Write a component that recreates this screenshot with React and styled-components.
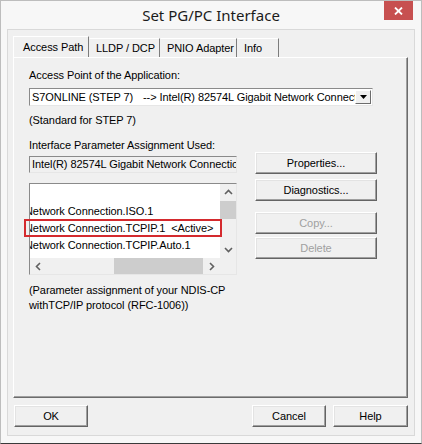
import styled, { createGlobalStyle } from 'styled-components';

const GlobalStyle = createGlobalStyle`
  html, body {
    margin: 0;
    padding: 0;
    background: #ffffff;
  }
  body {
    font-family: "Liberation Sans", Arial, sans-serif;
    letter-spacing: -0.08px;
  }
  * {
    box-sizing: border-box;
  }
`;

const Window = styled.div`
  width: 422px;
  height: 444px;
  display: flex;
  flex-direction: column;
  background: #f7f7f7;
  border: 1px solid #bdbdbd;
  border-bottom-color: #3a3a3a;
  padding: 0 6px 7px;
`;

const TitleBar = styled.div`
  height: 28px;
  display: grid;
  grid-template-columns: 1fr auto 1fr;
  align-items: center;
`;

const Title = styled.div`
  grid-column: 2;
  font-family: "Noto Sans", "Open Sans", sans-serif;
  font-size: 15px;
  letter-spacing: 0;
  color: #1b1b1b;
  padding-bottom: 1px;
`;

const CloseButton = styled.div`
  justify-self: end;
  align-self: start;
  width: 29px;
  height: 19px;
  margin-right: 2px;
  background: #c75050;
  display: flex;
  align-items: center;
  justify-content: center;
`;

const Client = styled.div`
  flex: 1;
  display: flex;
  flex-direction: column;
  background: #f0f0f0;
  border: 1px solid #d9d9d9;
  padding: 6px 6px 8px 5px;
`;

const TabRow = styled.div`
  height: 21px;
  display: flex;
  align-items: flex-end;
`;

const Tab = styled.div`
  width: ${(p) => p.$width}px;
  height: ${(p) => (p.$active ? 21 : 19)}px;
  padding-left: ${(p) => (p.$active ? 9 : 6)}px;
  display: flex;
  align-items: center;
  font-size: 11px;
  color: #000;
  border-top: 1px solid #ffffff;
  border-left: 1px solid ${(p) => (p.$first ? '#ffffff' : 'transparent')};
  border-right: 1px solid #7c7c7c;
  white-space: nowrap;
`;

const Panel = styled.div`
  flex: 1;
  display: flex;
  flex-direction: column;
  border: 1px solid;
  border-color: #ffffff #6c6c6c #6c6c6c #ffffff;
  box-shadow: inset -1px -1px 0 #a0a0a0;
  padding: 11px 15px 0 15px;
`;

const Label = styled.div`
  font-size: 11px;
  line-height: 13px;
  color: #000;
  margin-top: ${(p) => p.$gap || 0}px;
  white-space: nowrap;
`;

const Combo = styled.div`
  margin-top: 6px;
  width: 344px;
  height: 18px;
  display: flex;
  align-items: center;
  background: #ffffff;
  border: 1px solid;
  border-color: #8a8a8a #e6e6e6 #e6e6e6 #8a8a8a;
  padding: 0 1px 0 2px;
`;

const ComboText = styled.div`
  flex: 1;
  display: flex;
  font-size: 11px;
  color: #000;
  white-space: nowrap;
  overflow: hidden;
`;

const ComboName = styled.span`
  width: 111px;
  flex: none;
`;

const DropButton = styled.div`
  width: 16px;
  height: 14px;
  background: #f0f0f0;
  border: 1px solid;
  border-color: #ffffff #6c6c6c #6c6c6c #ffffff;
  display: flex;
  align-items: center;
  justify-content: center;
`;

const AssignArea = styled.div`
  display: flex;
  gap: 18px;
`;

const LeftColumn = styled.div`
  width: 208px;
  display: flex;
  flex-direction: column;
`;

const RightColumn = styled.div`
  width: 122px;
  display: flex;
  flex-direction: column;
`;

const Field = styled.div`
  margin-top: 4px;
  height: 17px;
  background: #f0f0f0;
  border: 1px solid;
  border-color: #8a8a8a #e6e6e6 #e6e6e6 #8a8a8a;
  font-size: 11px;
  line-height: 15px;
  padding-left: 2px;
  white-space: nowrap;
  overflow: hidden;
`;

const ListWrap = styled.div`
  position: relative;
  margin-top: 10px;
`;

const ListBox = styled.div`
  height: 92px;
  display: grid;
  grid-template-columns: 1fr 16px;
  grid-template-rows: 1fr 16px;
  background: #ffffff;
  border: 1px solid;
  border-color: #8a8a8a #e6e6e6 #e6e6e6 #8a8a8a;
`;

const ListItems = styled.div`
  overflow: hidden;
  padding-top: 2px;
`;

const ListItem = styled.div`
  height: 17px;
  line-height: 17px;
  margin-left: -5px;
  font-size: 11px;
  color: #000;
  white-space: nowrap;
`;

const VScroll = styled.div`
  display: flex;
  flex-direction: column;
  background: #f0f0f0;
`;

const HScroll = styled.div`
  display: flex;
  background: #f0f0f0;
`;

const Arrow = styled.div`
  flex: none;
  width: ${(p) => (p.$vertical ? 16 : 17)}px;
  height: ${(p) => (p.$vertical ? 17 : 16)}px;
  display: flex;
  align-items: center;
  justify-content: center;
`;

const Thumb = styled.div`
  flex: none;
  background: #cdcdcd;
  width: ${(p) => (p.$vertical ? '16px' : '89px')};
  height: ${(p) => (p.$vertical ? '18px' : '16px')};
`;

const Spacer = styled.div`
  flex: 1;
`;

const Corner = styled.div`
  background: #f0f0f0;
`;

const Highlight = styled.div`
  position: absolute;
  left: -5px;
  top: 36px;
  width: 198px;
  height: 18px;
  border: 2px solid #d42a2e;
  pointer-events: none;
`;

const Button = styled.div`
  height: 22px;
  width: ${(p) => p.$width || 122}px;
  margin-top: ${(p) => p.$gap || 0}px;
  margin-left: ${(p) => p.$left || 0};
  display: flex;
  align-items: center;
  justify-content: center;
  background: #f0f0f0;
  border: 1px solid;
  border-color: #ffffff #646464 #646464 #ffffff;
  box-shadow: inset -1px -1px 0 #a0a0a0, inset 1px 1px 0 #e3e3e3;
  font-size: 11px;
  color: ${(p) => (p.$disabled ? '#a0a0a0' : '#000')};
`;

const Footnote = styled.div`
  margin-top: 8px;
  font-size: 11px;
  line-height: 15px;
  color: #000;
`;

const ButtonRow = styled.div`
  display: flex;
  gap: 7px;
  margin-top: 7px;
  padding-left: 1px;
`;

const Chevron = ({ dir }) => {
  const paths = {
    up: 'M1 5 L4.5 1.5 L8 5',
    down: 'M1 2 L4.5 5.5 L8 2',
    left: 'M5 1 L1.5 4.5 L5 8',
    right: 'M2 1 L5.5 4.5 L2 8',
  };
  const vertical = dir === 'up' || dir === 'down';
  return (
    <svg
      width={vertical ? 9 : 7}
      height={vertical ? 7 : 9}
      viewBox={vertical ? '0 0 9 7' : '0 0 7 9'}
    >
      <path d={paths[dir]} fill="none" stroke="#606060" strokeWidth="1.6" />
    </svg>
  );
};

export default function App() {
  return (
    <>
      <GlobalStyle />
      <Window>
        <TitleBar>
          <Title>Set PG/PC Interface</Title>
          <CloseButton>
            <svg width="9" height="8" viewBox="0 0 9 8">
              <path d="M1 0.5 L8 7.5 M8 0.5 L1 7.5" stroke="#ffffff" strokeWidth="1.8" />
            </svg>
          </CloseButton>
        </TitleBar>
        <Client>
          <TabRow>
            <Tab $active $first $width={76}>Access Path</Tab>
            <Tab $width={71}>LLDP / DCP</Tab>
            <Tab $width={77}>PNIO Adapter</Tab>
            <Tab $width={42}>Info</Tab>
          </TabRow>
          <Panel>
            <Label>Access Point of the Application:</Label>
            <Combo>
              <ComboText>
                <ComboName>S7ONLINE (STEP 7)</ComboName>
                <span>--&gt; Intel(R) 82574L Gigabit Network Connection.TCPIP.1</span>
              </ComboText>
              <DropButton>
                <svg width="7" height="4" viewBox="0 0 7 4">
                  <path d="M0 0 L7 0 L3.5 4 Z" fill="#000" />
                </svg>
              </DropButton>
            </Combo>
            <Label $gap={8}>(Standard for STEP 7)</Label>
            <Label $gap={12}>Interface Parameter Assignment Used:</Label>
            <AssignArea>
              <LeftColumn>
                <Field>Intel(R) 82574L Gigabit Network Connection.TCPIP.1</Field>
                <ListWrap>
                  <ListBox>
                    <ListItems>
                      <ListItem>&nbsp;</ListItem>
                      <ListItem>Network Connection.ISO.1</ListItem>
                      <ListItem>Network Connection.TCPIP.1&nbsp;&nbsp;&lt;Active&gt;</ListItem>
                      <ListItem>Network Connection.TCPIP.Auto.1</ListItem>
                    </ListItems>
                    <VScroll>
                      <Arrow $vertical><Chevron dir="up" /></Arrow>
                      <Thumb $vertical />
                      <Spacer />
                      <Arrow $vertical><Chevron dir="down" /></Arrow>
                    </VScroll>
                    <HScroll>
                      <Arrow><Chevron dir="left" /></Arrow>
                      <Spacer />
                      <Thumb />
                      <Arrow><Chevron dir="right" /></Arrow>
                    </HScroll>
                    <Corner />
                  </ListBox>
                  <Highlight />
                </ListWrap>
              </LeftColumn>
              <RightColumn>
                <Button>Properties...</Button>
                <Button $gap={5}>Diagnostics...</Button>
                <Button $gap={11} $disabled>Copy...</Button>
                <Button $gap={3} $disabled>Delete</Button>
              </RightColumn>
            </AssignArea>
            <Footnote>
              (Parameter assignment of your NDIS-CP
              <br />
              withTCP/IP protocol (RFC-1006))
            </Footnote>
          </Panel>
          <ButtonRow>
            <Button $width={74}>OK</Button>
            <Button $width={74} $left="auto">Cancel</Button>
            <Button $width={75}>Help</Button>
          </ButtonRow>
        </Client>
      </Window>
    </>
  );
}
